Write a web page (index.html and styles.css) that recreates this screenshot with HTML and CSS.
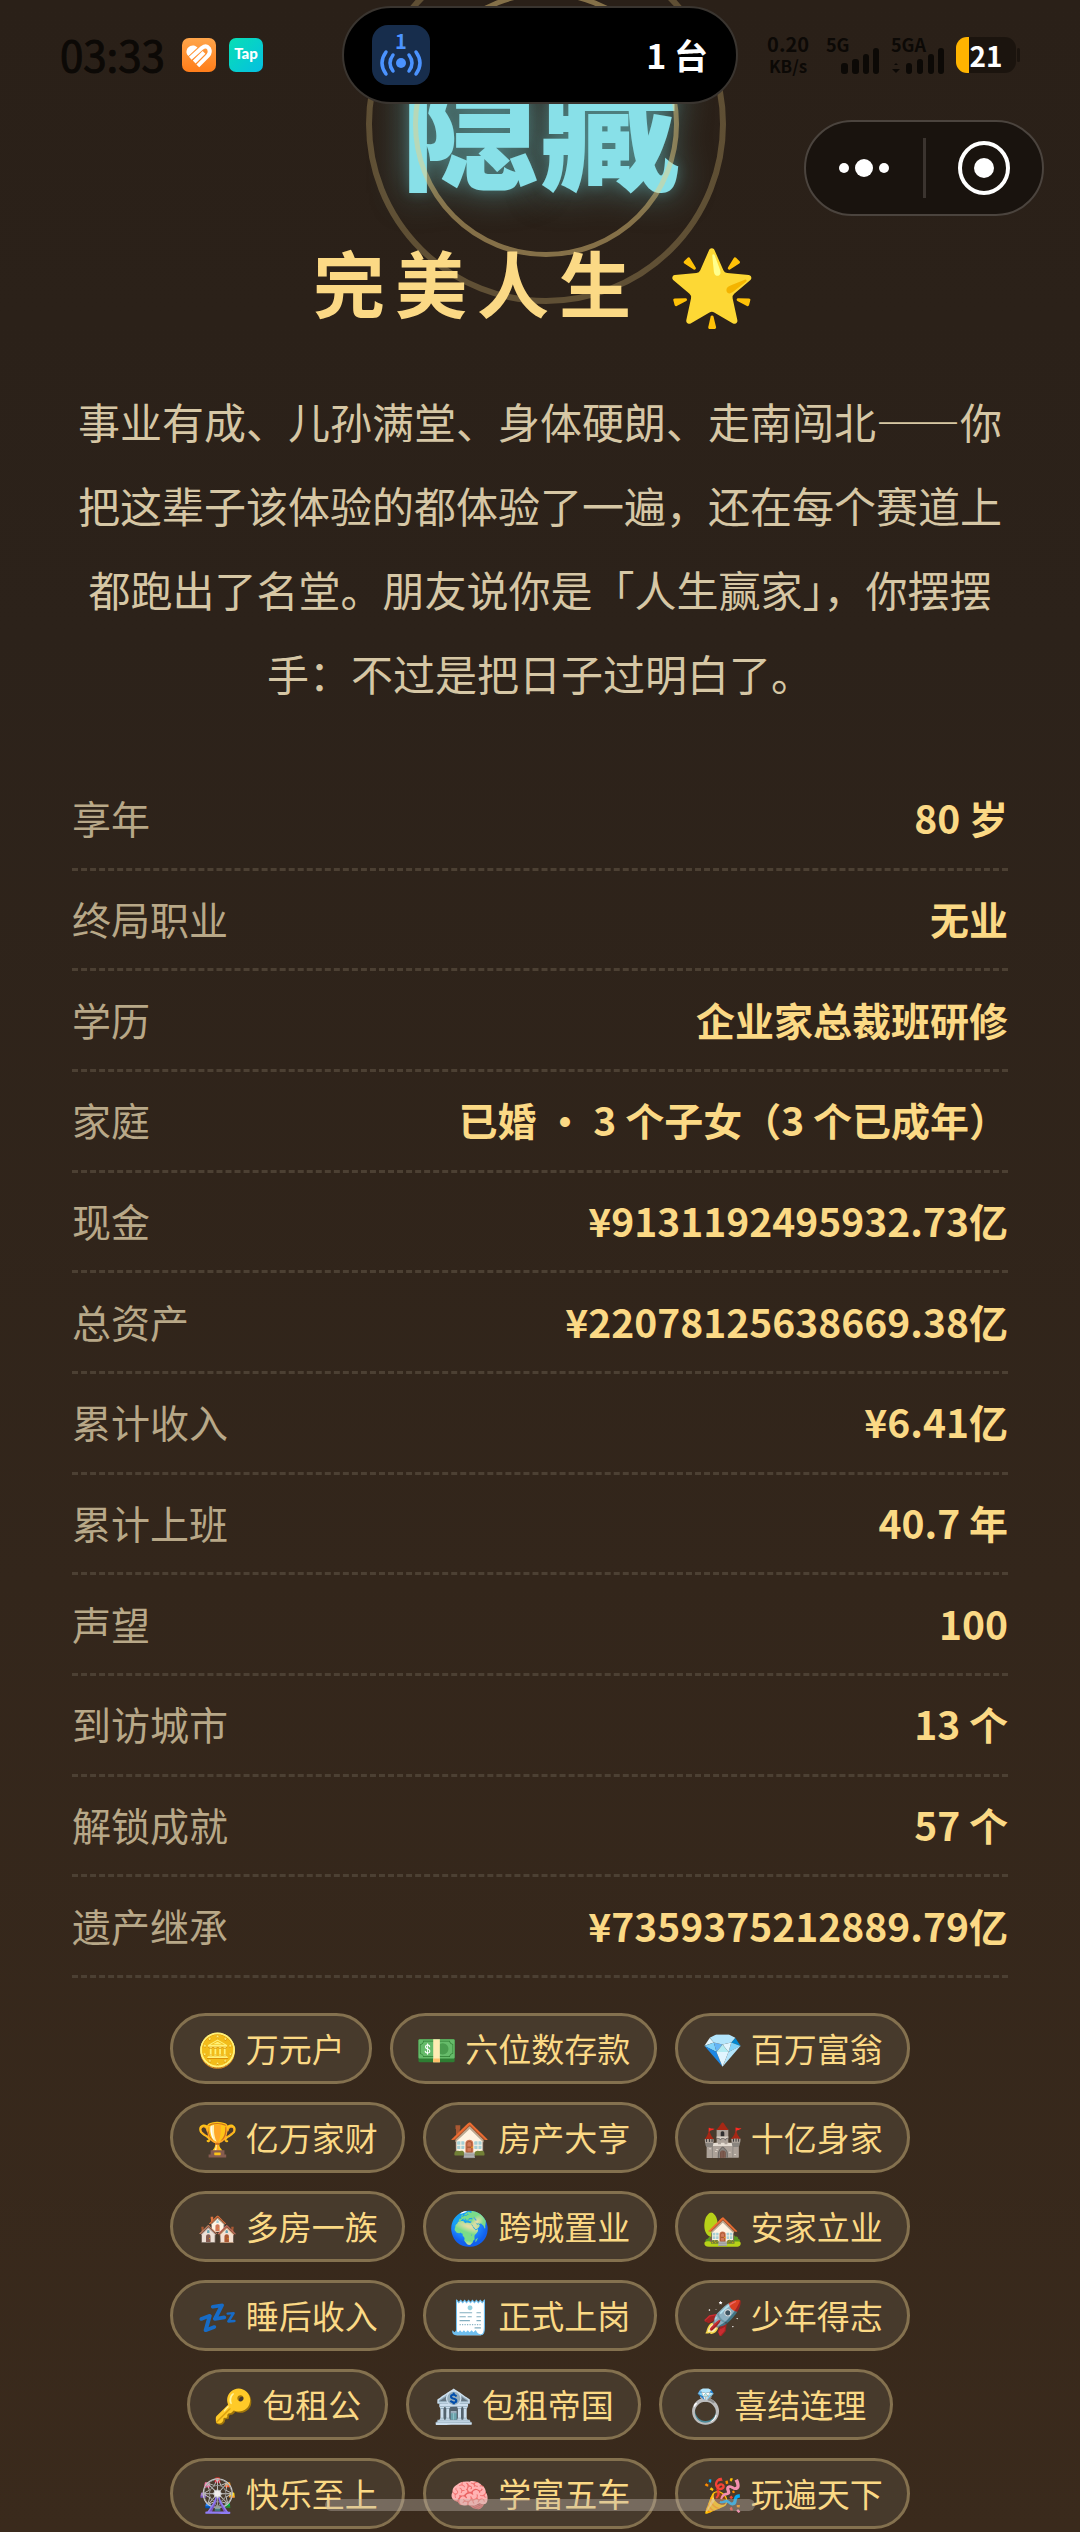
FILE: index.html
```html
<!DOCTYPE html>
<html lang="zh-CN">
<head>
<meta charset="utf-8">
<meta name="viewport" content="width=device-width, initial-scale=1">
<title>完美人生</title>
<link rel="stylesheet" href="styles.css">
</head>
<body>
<div class="statusbar">
  <div class="status-left">
    <time class="clock">03:33</time>
    <svg class="app-icon" viewBox="0 0 34 34" aria-hidden="true">
      <defs><linearGradient id="orange" x1="0" y1="0" x2="0" y2="1"><stop offset="0" stop-color="#ffa54a"/><stop offset="1" stop-color="#ff7d1a"/></linearGradient></defs>
      <rect width="34" height="34" rx="7" fill="url(#orange)"/>
      <path d="M4.500 14.500C4 8.500 11 5 15.500 9.500L6.500 18C5.300 17 4.700 16 4.500 14.500Z" fill="#fff"/>
      <g fill="none" stroke="#fff" stroke-width="4"><path d="M8.300 20.300 20 9.800Q24.300 6.800 27 10.500Q29 14.300 26 17.700L15.800 27.800"/><path d="M12.200 24 22 14.400"/></g>
    </svg>
    <svg class="app-icon" viewBox="0 0 34 34" aria-hidden="true">
      <defs><linearGradient id="teal" x1="0" y1="0" x2="1" y2="1"><stop offset="0" stop-color="#08dfb4"/><stop offset="1" stop-color="#05bfe2"/></linearGradient></defs>
      <rect width="34" height="34" rx="7" fill="url(#teal)"/>
      <text class="tap-text" x="17" y="21" text-anchor="middle">Tap</text>
    </svg>
  </div>
  <div class="status-right">
    <div class="netspeed"><span>0.20</span><span>KB/s</span></div>
    <div class="signal"><span>5G</span>
      <svg viewBox="0 0 40 26" aria-hidden="true"><g fill="#0c0906"><rect x="1" y="15" width="7" height="11" rx="3"/><rect x="12" y="11" width="7" height="15" rx="3"/><rect x="23" y="6" width="6" height="20" rx="3"/><rect x="33" y="0" width="6" height="26" rx="3"/></g></svg>
    </div>
    <div class="signal signal-wide"><span>5GA</span>
      <svg viewBox="0 0 54 26" aria-hidden="true"><g fill="#0c0906"><path d="M1 21h8l-4 4zM3 17l2-2 2 2z"/><rect x="15" y="15" width="6" height="11" rx="3"/><rect x="26" y="11" width="6" height="15" rx="3"/><rect x="37" y="6" width="6" height="20" rx="3"/><rect x="47" y="0" width="6" height="26" rx="3"/></g></svg>
    </div>
    <div class="battery"><span class="battery-body">21</span><span class="battery-cap"></span></div>
  </div>
</div>

<div class="island">
  <svg class="hotspot" viewBox="0 0 58 60" aria-hidden="true">
    <rect width="58" height="60" rx="16" fill="#172d4c"/>
    <text class="hotspot-count" x="29" y="24" text-anchor="middle">1</text>
    <circle cx="29" cy="38" r="5" fill="#4b93ff"/>
    <g fill="none" stroke="#4b93ff" stroke-width="3.500" stroke-linecap="round"><path d="M21 30q-6 8 0 16M14 27q-8 11 0 22M37 30q6 8 0 16M44 27q8 11 0 22"/></g>
  </svg>
  <span class="island-label">1 台</span>
</div>

<div class="capsule">
  <button class="capsule-button" type="button" aria-label="更多">
    <svg viewBox="0 0 50 20" aria-hidden="true"><g fill="#fff"><circle cx="5" cy="10" r="5"/><circle cx="25" cy="10" r="9"/><circle cx="45" cy="10" r="5"/></g></svg>
  </button>
  <span class="capsule-line"></span>
  <button class="capsule-button" type="button" aria-label="关闭">
    <svg class="target" viewBox="0 0 52 54" aria-hidden="true"><ellipse cx="26" cy="27" rx="24" ry="25" fill="none" stroke="#fff" stroke-width="4"/><circle cx="26" cy="27" r="10" fill="#fff"/></svg>
  </button>
</div>

<main class="ending">
  <header class="hero">
    <div class="seal"><span class="seal-text">隐藏</span></div>
    <h1 class="title">完美人生 🌟</h1>
  </header>
  <p class="story">事业有成、儿孙满堂、身体硬朗、走南闯北——你把这辈子该体验的都体验了一遍，还在每个赛道上都跑出了名堂。朋友说你是「人生赢家」，你摆摆手：不过是把日子过明白了。</p>
  <dl class="stats">
    <div class="stat"><dt>享年</dt><dd>80 岁</dd></div>
    <div class="stat"><dt>终局职业</dt><dd>无业</dd></div>
    <div class="stat"><dt>学历</dt><dd>企业家总裁班研修</dd></div>
    <div class="stat"><dt>家庭</dt><dd>已婚 · 3 个子女（3 个已成年）</dd></div>
    <div class="stat"><dt>现金</dt><dd>¥9131192495932.73亿</dd></div>
    <div class="stat"><dt>总资产</dt><dd>¥22078125638669.38亿</dd></div>
    <div class="stat"><dt>累计收入</dt><dd>¥6.41亿</dd></div>
    <div class="stat"><dt>累计上班</dt><dd>40.7 年</dd></div>
    <div class="stat"><dt>声望</dt><dd>100</dd></div>
    <div class="stat"><dt>到访城市</dt><dd>13 个</dd></div>
    <div class="stat"><dt>解锁成就</dt><dd>57 个</dd></div>
    <div class="stat"><dt>遗产继承</dt><dd>¥7359375212889.79亿</dd></div>
  </dl>
  <ul class="badges">
    <li>🪙 万元户</li>
    <li>💵 六位数存款</li>
    <li>💎 百万富翁</li>
    <li>🏆 亿万家财</li>
    <li>🏠 房产大亨</li>
    <li>🏰 十亿身家</li>
    <li>🏘️ 多房一族</li>
    <li>🌍 跨城置业</li>
    <li>🏡 安家立业</li>
    <li>💤 睡后收入</li>
    <li>🧾 正式上岗</li>
    <li>🚀 少年得志</li>
    <li>🔑 包租公</li>
    <li>🏦 包租帝国</li>
    <li>💍 喜结连理</li>
    <li>🎡 快乐至上</li>
    <li>🧠 学富五车</li>
    <li>🎉 玩遍天下</li>
  </ul>
</main>
<div class="home-bar"></div>
</body>
</html>
```
FILE: styles.css
```css
*, *::before, *::after { box-sizing: border-box; }

body {
  margin: 0;
  min-height: 100vh;
  background: linear-gradient(#2a2018, #2c221a 25%, #3a2a1c);
  color: #d6c7a5;
  font-family: "Noto Sans CJK SC", "Noto Color Emoji", sans-serif;
}

/* System chrome that floats over the page */
.statusbar {
  position: absolute;
  inset: 0 0 auto 0;
  height: 110px;
  padding: 0 60px;
  display: flex;
  justify-content: space-between;
  align-items: center;
  color: #0c0906;
}
.status-left, .status-right { display: flex; align-items: center; }
.status-left { gap: 13px; }
.clock { margin-right: 4px; font-size: 42px; line-height: 56px; padding-bottom: 2px; -webkit-text-stroke: 1px #0c0906; }
.app-icon { width: 34px; height: 34px; }
.tap-text { font: 900 15px Lato, sans-serif; fill: #fff; }
.status-right { gap: 11px; }
.netspeed {
  display: flex;
  flex-direction: column;
  align-items: center;
  margin-right: 6px;
  font-size: 20px;
  line-height: 22px;
  font-weight: 700;
}
.netspeed span + span { font-size: 17px; }
.signal { position: relative; width: 54px; height: 38px; font-size: 18px; line-height: 16px; font-weight: 700; }
.signal span { display: block; }
.signal svg { position: absolute; right: 0; bottom: 0; width: 40px; height: 26px; }
.signal-wide svg { width: 54px; }
.battery { display: flex; align-items: center; gap: 1px; }
.battery-body {
  width: 60px;
  height: 36px;
  border-radius: 11px;
  background: linear-gradient(90deg, #ffb400 13px, #1b140e 13px);
  color: #fff;
  font-size: 28px;
  line-height: 36px;
  font-weight: 700;
  text-align: center;
}
.battery-cap { width: 3px; height: 14px; border-radius: 2px; background: #1b140e; }

.island {
  position: absolute;
  z-index: 2;
  top: 6px;
  left: 50%;
  width: 396px;
  height: 98px;
  transform: translateX(-50%);
  padding: 0 28px;
  display: flex;
  justify-content: space-between;
  align-items: center;
  border: 2px solid #3a3530;
  border-radius: 49px;
  background: #000;
}
.hotspot { width: 58px; height: 60px; }
.hotspot-count { font: 700 20px "Noto Sans CJK SC", sans-serif; fill: #4b93ff; }
.island-label { color: #fff; font-size: 34px; line-height: 48px; font-weight: 700; }

.capsule {
  position: absolute;
  z-index: 2;
  top: 120px;
  right: 36px;
  width: 240px;
  height: 96px;
  display: flex;
  align-items: center;
  border: 2px solid #4b443e;
  border-radius: 48px;
  background: #19130e;
}
.capsule-button {
  flex: 1;
  height: 100%;
  padding: 0;
  border: 0;
  background: none;
  display: flex;
  align-items: center;
  justify-content: center;
}
.capsule-button svg { width: 50px; height: 20px; }
.capsule-button .target { width: 52px; height: 54px; }
.capsule-line { width: 3px; height: 60px; background: #3b342f; }

.home-bar {
  position: fixed;
  z-index: 2;
  bottom: 21px;
  left: 50%;
  width: 430px;
  height: 12px;
  transform: translateX(-50%);
  border-radius: 6px;
  background: rgba(190, 180, 170, 0.4);
}

/* Ending card */
.ending { padding: 0 72px; }
.hero { display: flex; flex-direction: column; align-items: center; padding-top: 48px; }
.seal { position: relative; }
.seal::before, .seal::after {
  content: "";
  position: absolute;
  left: calc(50% + 6px);
  top: calc(50% + 6px);
  border-radius: 50%;
  transform: translate(-50%, -50%);
}
.seal::before { width: 360px; height: 360px; border: 6px solid rgba(240, 208, 128, 0.27); }
.seal::after { width: 266px; height: 266px; border: 5px solid rgba(240, 208, 128, 0.46); }
.seal-text {
  display: block;
  color: #88e0e8;
  font-size: 140px;
  line-height: 140px;
  font-weight: 900;
  text-shadow: 0 0 36px rgba(103, 190, 195, 0.6), 0 0 12px rgba(80, 140, 142, 0.4);
}
.title {
  position: relative;
  margin: 45px 0 0;
  color: #fbd985;
  font-size: 72px;
  line-height: 96px;
  font-weight: 700;
  letter-spacing: 10px;
}
.story {
  margin: 50px 0 55px;
  font-size: 42px;
  line-height: 84px;
  text-align: center;
}
.stats {
  margin: 0;
  display: grid;
  grid-auto-rows: 1fr;
  min-height: 1208px;
}
.stat {
  display: flex;
  justify-content: space-between;
  align-items: center;
  padding-bottom: 3px;
  border-bottom: 3px dashed #4c4033;
  font-size: 39px;
  line-height: 60px;
}
.stat dt { color: #b8a888; }
.stat dd { margin: 0; color: #fbd985; font-weight: 700; }
.badges {
  margin: 35px 0 2px;
  padding: 0;
  list-style: none;
  display: flex;
  flex-wrap: wrap;
  justify-content: center;
  gap: 18px;
}
.badges li {
  padding: 0 24px;
  border: 3px solid #84714f;
  border-radius: 36px;
  background: #473a2c;
  color: #fbd985;
  font-size: 33px;
  line-height: 65px;
  white-space: nowrap;
}
```
